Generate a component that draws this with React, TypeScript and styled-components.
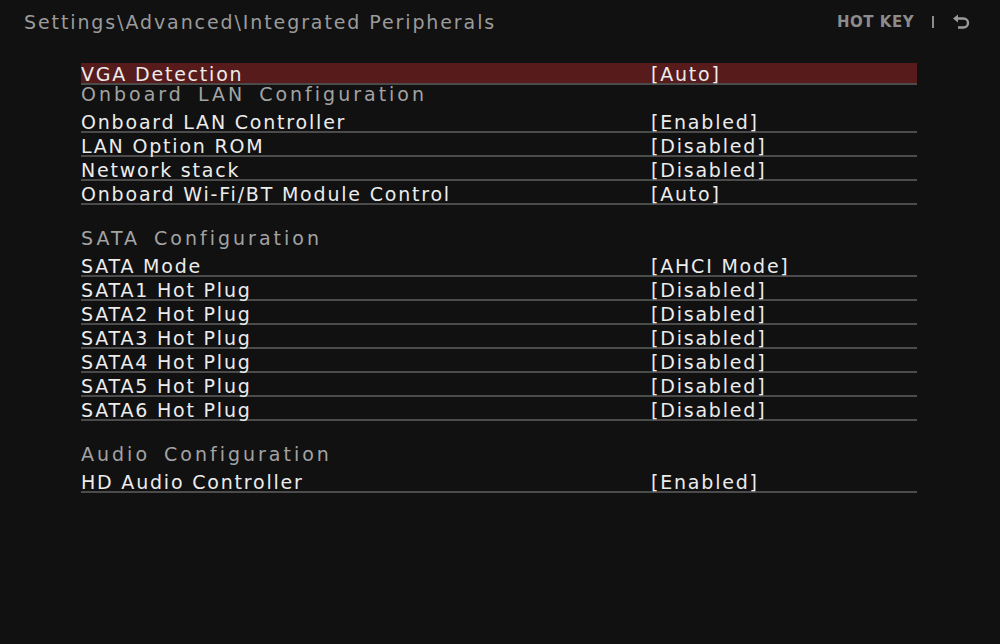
import styled, { createGlobalStyle } from 'styled-components';

const GlobalStyle = createGlobalStyle`
  html, body {
    margin: 0;
    padding: 0;
    background: #111111;
  }
  body {
    font-family: 'DejaVu Sans', 'Liberation Sans', sans-serif;
  }
`;

const Screen = styled.div`
  width: 1000px;
  height: 644px;
  background: #111111;
  overflow: hidden;
`;

const TopBar = styled.div`
  height: 44px;
  display: flex;
  align-items: center;
  justify-content: space-between;
  padding: 0 30px 0 24px;
`;

const Crumbs = styled.div`
  color: #9b9b9b;
  font-size: 19px;
  letter-spacing: 1.9px;
  white-space: nowrap;
`;

const HotKeys = styled.div`
  display: flex;
  align-items: center;
  gap: 12px;
  color: #8c8c8c;
  font-size: 15px;
  font-weight: bold;
  letter-spacing: 0.5px;
`;

const Divider = styled.span`
  display: block;
  width: 2px;
  height: 12px;
  background: #8c8c8c;
  margin: 0 6px;
`;

const List = styled.div`
  display: flex;
  flex-direction: column;
  width: 836px;
  margin: 17px 0 0 81px;
`;

const Row = styled.div`
  height: 24px;
  box-sizing: border-box;
  padding-top: 2px;
  border-bottom: 2px solid #4b4b4b;
`;

const RowBody = styled.div<{ $selected?: boolean }>`
  height: 20px;
  display: grid;
  grid-template-columns: 570px 1fr;
  align-items: center;
  background: ${p => (p.$selected ? '#581b1b' : 'transparent')};
  color: #ececec;
  font-size: 19px;
  letter-spacing: 1.8px;
  white-space: nowrap;
`;

const Heading = styled.div`
  height: 24px;
  line-height: 18px;
  color: #a3a3a3;
  font-size: 19px;
  letter-spacing: 3px;
  word-spacing: 5px;
  white-space: nowrap;
`;

const Spacer = styled.div`
  height: 24px;
`;

type Item =
  | { kind: 'row'; label: string; value: string; selected?: boolean }
  | { kind: 'heading'; label: string }
  | { kind: 'gap' };

const items: Item[] = [
  { kind: 'row', label: 'VGA Detection', value: '[Auto]', selected: true },
  { kind: 'heading', label: 'Onboard LAN Configuration' },
  { kind: 'row', label: 'Onboard LAN Controller', value: '[Enabled]' },
  { kind: 'row', label: 'LAN Option ROM', value: '[Disabled]' },
  { kind: 'row', label: 'Network stack', value: '[Disabled]' },
  { kind: 'row', label: 'Onboard Wi-Fi/BT Module Control', value: '[Auto]' },
  { kind: 'gap' },
  { kind: 'heading', label: 'SATA Configuration' },
  { kind: 'row', label: 'SATA Mode', value: '[AHCI Mode]' },
  { kind: 'row', label: 'SATA1 Hot Plug', value: '[Disabled]' },
  { kind: 'row', label: 'SATA2 Hot Plug', value: '[Disabled]' },
  { kind: 'row', label: 'SATA3 Hot Plug', value: '[Disabled]' },
  { kind: 'row', label: 'SATA4 Hot Plug', value: '[Disabled]' },
  { kind: 'row', label: 'SATA5 Hot Plug', value: '[Disabled]' },
  { kind: 'row', label: 'SATA6 Hot Plug', value: '[Disabled]' },
  { kind: 'gap' },
  { kind: 'heading', label: 'Audio Configuration' },
  { kind: 'row', label: 'HD Audio Controller', value: '[Enabled]' },
];

function BackIcon() {
  return (
    <svg width="18" height="16" viewBox="0 0 18 16">
      <path d="M1 4.5 L6 0.5 L6 8.5 Z" fill="#9a9a9a" />
      <path
        d="M5 4.5 H11.5 A4.5 4.5 0 0 1 11.5 13.5 H6"
        fill="none"
        stroke="#9a9a9a"
        strokeWidth="2.4"
      />
    </svg>
  );
}

function App() {
  return (
    <Screen>
      <GlobalStyle />
      <TopBar>
        <Crumbs>Settings\Advanced\Integrated Peripherals</Crumbs>
        <HotKeys>
          <span>HOT KEY</span>
          <Divider />
          <BackIcon />
        </HotKeys>
      </TopBar>
      <List>
        {items.map((it, i) => {
          if (it.kind === 'gap') return <Spacer key={i} />;
          if (it.kind === 'heading') return <Heading key={i}>{it.label}</Heading>;
          return (
            <Row key={i}>
              <RowBody $selected={it.selected}>
                <span>{it.label}</span>
                <span>{it.value}</span>
              </RowBody>
            </Row>
          );
        })}
      </List>
    </Screen>
  );
}

export default App;
